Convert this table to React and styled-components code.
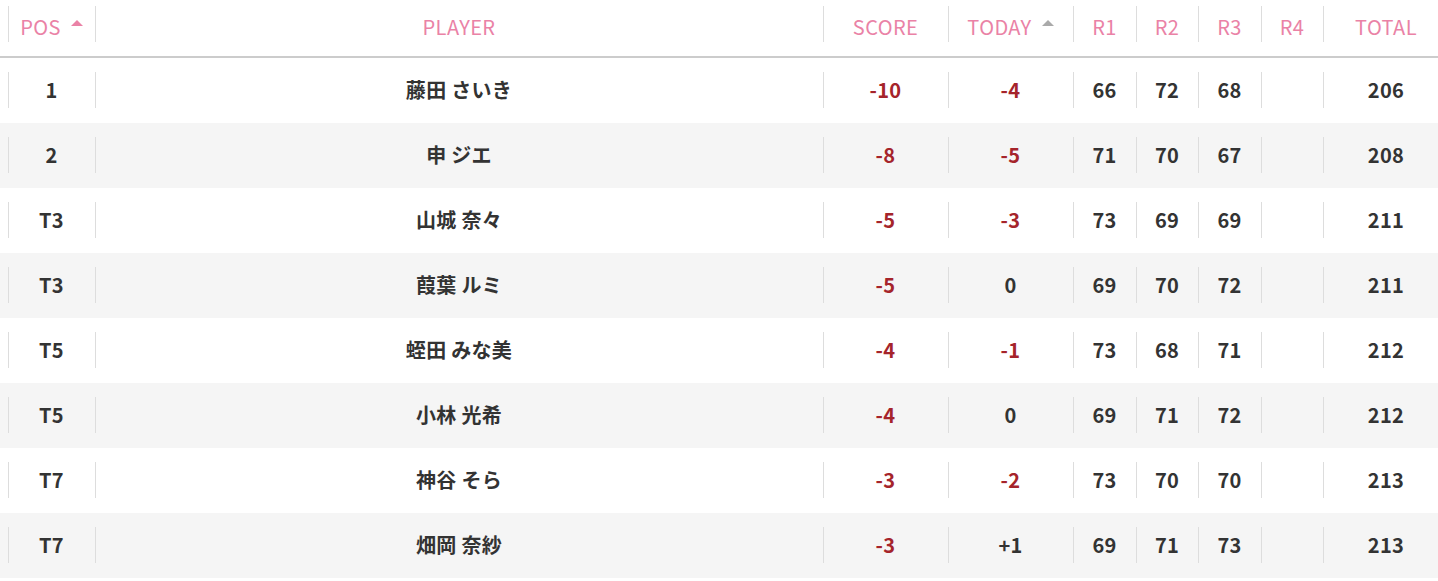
import React from "react";
import styled, { createGlobalStyle } from "styled-components";

const Global = createGlobalStyle`
  html, body { margin: 0; padding: 0; background: #fff; }
  body { font-family: "Noto Sans CJK JP", "Noto Sans", sans-serif; }
`;

const COLS = "87px 728px 125px 125px 63px 62px 63px 62px 1fr";

const Table = styled.div`
  width: 1438px;
  display: flex;
  flex-direction: column;
`;

const HeaderRow = styled.div`
  display: grid;
  grid-template-columns: ${COLS};
  padding-left: 8px;
  height: 56px;
  border-bottom: 2px solid #cccccc;
`;

const BodyRow = styled.div`
  display: grid;
  grid-template-columns: ${COLS};
  padding-left: 8px;
  height: 65px;
  background: ${(p) => (p.$alt ? "#f5f5f5" : "#ffffff")};
`;

const HeadCell = styled.div`
  position: relative;
  display: flex;
  align-items: center;
  justify-content: center;
  gap: 10px;
  padding-left: ${(p) => p.$pl || 0}px;
  padding-bottom: 4px;
  font-size: 20px;
  font-weight: 400;
  letter-spacing: 0.4px;
  color: #ea82a6;
  &::before {
    content: "";
    position: absolute;
    left: 0;
    top: 6px;
    height: 36px;
    width: 1px;
    background: #dddddd;
  }
`;

const Cell = styled.div`
  position: relative;
  display: flex;
  align-items: center;
  justify-content: center;
  padding-left: ${(p) => p.$pl || 0}px;
  padding-bottom: 2px;
  font-size: 20px;
  font-weight: 700;
  letter-spacing: 0.3px;
  color: ${(p) => (p.$red ? "#a5242b" : "#333333")};
  &::before {
    content: "";
    position: absolute;
    left: 0;
    top: 14px;
    height: 36px;
    width: 1px;
    background: #dddddd;
  }
`;

const Arrow = styled.span`
  display: inline-block;
  width: 0;
  height: 0;
  border-left: 6px solid transparent;
  border-right: 6px solid transparent;
  border-bottom: 6px solid ${(p) => p.$color};
  margin-bottom: 6px;
`;

const rows = [
  ["1", "藤田 さいき", "-10", "-4", "66", "72", "68", "", "206"],
  ["2", "申 ジエ", "-8", "-5", "71", "70", "67", "", "208"],
  ["T3", "山城 奈々", "-5", "-3", "73", "69", "69", "", "211"],
  ["T3", "葭葉 ルミ", "-5", "0", "69", "70", "72", "", "211"],
  ["T5", "蛭田 みな美", "-4", "-1", "73", "68", "71", "", "212"],
  ["T5", "小林 光希", "-4", "0", "69", "71", "72", "", "212"],
  ["T7", "神谷 そら", "-3", "-2", "73", "70", "70", "", "213"],
  ["T7", "畑岡 奈紗", "-3", "+1", "69", "71", "73", "", "213"],
];

const isRed = (v) => v.startsWith("-");

export default function App() {
  return (
    <>
      <Global />
      <Table>
        <HeaderRow>
          <HeadCell>
            POS <Arrow $color="#ea82a6" />
          </HeadCell>
          <HeadCell>PLAYER</HeadCell>
          <HeadCell>SCORE</HeadCell>
          <HeadCell>
            TODAY <Arrow $color="#aaaaaa" />
          </HeadCell>
          <HeadCell>R1</HeadCell>
          <HeadCell>R2</HeadCell>
          <HeadCell>R3</HeadCell>
          <HeadCell>R4</HeadCell>
          <HeadCell $pl={11}>TOTAL</HeadCell>
        </HeaderRow>
        {rows.map((r, i) => (
          <BodyRow key={i} $alt={i % 2 === 1}>
            <Cell>{r[0]}</Cell>
            <Cell>{r[1]}</Cell>
            <Cell $red={isRed(r[2])}>{r[2]}</Cell>
            <Cell $red={isRed(r[3])}>{r[3]}</Cell>
            <Cell>{r[4]}</Cell>
            <Cell>{r[5]}</Cell>
            <Cell>{r[6]}</Cell>
            <Cell>{r[7]}</Cell>
            <Cell $pl={11}>{r[8]}</Cell>
          </BodyRow>
        ))}
      </Table>
    </>
  );
}
